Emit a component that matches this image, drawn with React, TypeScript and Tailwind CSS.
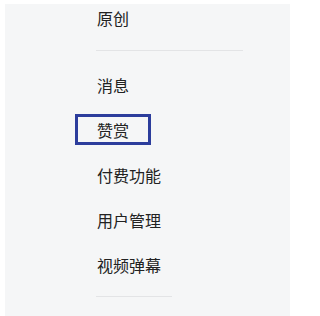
const items = [
  { label: '消息' },
  { label: '赞赏', active: true },
  { label: '付费功能' },
  { label: '用户管理' },
  { label: '视频弹幕' },
];

export default function App() {
  return (
    <div
      className="w-[290px] h-[316px] bg-white pt-1 pl-[5px] overflow-hidden"
      style={{ fontFamily: '"Noto Sans CJK SC", "Microsoft YaHei", sans-serif' }}
    >
      <div className="h-full bg-[#f5f6f7] pl-[70px] text-[16px] text-[#222]">
        {/* 原创 */}
        <div className="h-[28px] flex items-center">
          <span className="px-[22px] leading-none">原创</span>
        </div>
        <div className="mt-[18px] ml-[21px] w-[147px] h-px bg-[#e3e4e6]" />

        {/* Menu */}
        <div className="mt-[11px]">
          {items.map((item) => (
            <div key={item.label} className="h-[45px] flex items-center">
              <span
                className={`h-[31px] flex items-center px-[19px] border-[3px] leading-none ${
                  item.active ? 'border-[#2c3d9c]' : 'border-transparent'
                }`}
              >
                {item.label}
              </span>
            </div>
          ))}
        </div>
        <div className="mt-[9px] ml-[21px] w-[76px] h-px bg-[#e3e4e6]" />
      </div>
    </div>
  );
}
